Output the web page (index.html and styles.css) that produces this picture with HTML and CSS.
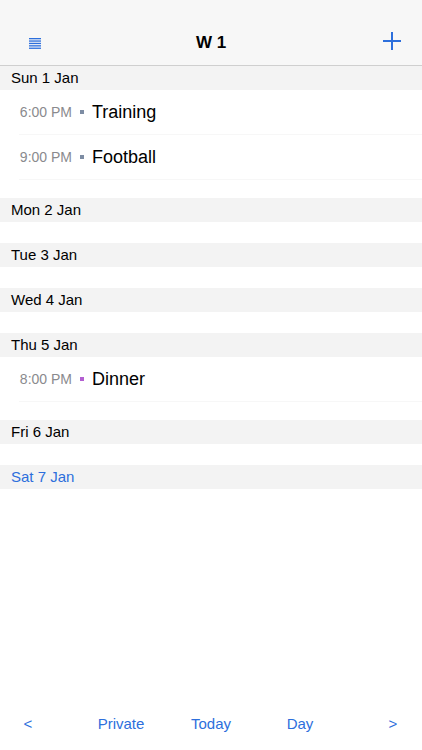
FILE: index.html
```html
<!DOCTYPE html>
<html lang="en">
<head>
    <meta charset="UTF-8">
    <meta name="viewport" content="width=device-width, initial-scale=1.0">
    <title>W 1</title>
    <link rel="stylesheet" href="styles.css">
</head>
<body>

    <div class="app">
        <header class="navbar">
            <button class="nav-btn menu-btn" aria-label="Menu">
                <svg width="12" height="11" viewBox="0 0 12 11">
                    <rect x="0" y="0" width="12" height="1.3" fill="#2d6fdc"/>
                    <rect x="0" y="2.4" width="12" height="1.3" fill="#2d6fdc"/>
                    <rect x="0" y="4.8" width="12" height="1.3" fill="#2d6fdc"/>
                    <rect x="0" y="7.2" width="12" height="1.3" fill="#2d6fdc"/>
                    <rect x="0" y="9.6" width="12" height="1.3" fill="#2d6fdc"/>
                </svg>
            </button>
            <h1 class="title">W 1</h1>
            <button class="nav-btn add-btn" aria-label="Add">
                <svg width="20" height="20" viewBox="0 0 20 20">
                    <path d="M10 1 V19 M1 10 H19" stroke="#2d6fdc" stroke-width="2" fill="none"/>
                </svg>
            </button>
        </header>

        <main class="week">
            <section class="day has-events">
                <div class="day-head">Sun 1 Jan</div>
                <div class="event">
                    <span class="time">6:00 PM</span>
                    <span class="dot dot-grey"></span>
                    <span class="name">Training</span>
                </div>
                <div class="event">
                    <span class="time">9:00 PM</span>
                    <span class="dot dot-grey"></span>
                    <span class="name">Football</span>
                </div>
            </section>

            <section class="day">
                <div class="day-head">Mon 2 Jan</div>
            </section>

            <section class="day">
                <div class="day-head">Tue 3 Jan</div>
            </section>

            <section class="day">
                <div class="day-head">Wed 4 Jan</div>
            </section>

            <section class="day has-events">
                <div class="day-head">Thu 5 Jan</div>
                <div class="event">
                    <span class="time">8:00 PM</span>
                    <span class="dot dot-purple"></span>
                    <span class="name">Dinner</span>
                </div>
            </section>

            <section class="day">
                <div class="day-head">Fri 6 Jan</div>
            </section>

            <section class="day today">
                <div class="day-head">Sat 7 Jan</div>
            </section>
        </main>

        <footer class="toolbar">
            <span class="tool">&lt;</span>
            <span class="tool">Private</span>
            <span class="tool">Today</span>
            <span class="tool">Day</span>
            <span class="tool">&gt;</span>
        </footer>
    </div>

</body>
</html>
```

FILE: styles.css
```css
body {
    margin: 0;
    padding: 0;
    font-family: 'Liberation Sans', Arial, sans-serif;
    color: #000;
    background: #fff;
}
.app {
    display: flex;
    flex-direction: column;
    height: 750px;
    width: 422px;
}
.navbar {
    height: 53px;
    padding-bottom: 12px;
    background: #f7f7f7;
    border-bottom: 1px solid #cfcfcf;
    display: grid;
    grid-template-columns: 70px 1fr 70px;
    align-items: end;
}
.nav-btn {
    background: none;
    border: none;
    padding: 0;
    display: flex;
    align-items: center;
    height: 20px;
}
.menu-btn {
    padding-left: 29px;
    padding-top: 1px;
}
.add-btn {
    justify-content: flex-end;
    padding-right: 20px;
    margin-bottom: 2px;
}
.title {
    margin: 0;
    text-align: center;
    font-size: 17px;
    font-weight: bold;
    line-height: 20px;
}
.week {
    flex: 1;
}
.day {
    padding-bottom: 21px;
}
.day.has-events {
    padding-bottom: 18px;
}
.day-head {
    height: 24px;
    line-height: 24px;
    background: #f3f3f3;
    padding-left: 11px;
    font-size: 15px;
}
.today .day-head {
    color: #2d6fdc;
}
.event {
    height: 45px;
    display: flex;
    align-items: center;
    margin-left: 19px;
    border-bottom: 1px solid #f7f7f7;
    box-sizing: border-box;
}
.time {
    width: 53px;
    text-align: right;
    font-size: 14px;
    color: #8a8a8e;
}
.dot {
    width: 4px;
    height: 4px;
    margin-left: 8px;
    margin-right: 8px;
}
.dot-grey {
    background: #7d8ca3;
}
.dot-purple {
    background: #b35fd1;
}
.name {
    font-size: 18px;
}
.toolbar {
    height: 50px;
    padding-bottom: 2px;
    display: grid;
    grid-template-columns: 56px 130px 50px 128px 1fr;
    align-items: center;
    color: #2d6fdc;
    font-size: 15px;
    text-align: center;
}
```
